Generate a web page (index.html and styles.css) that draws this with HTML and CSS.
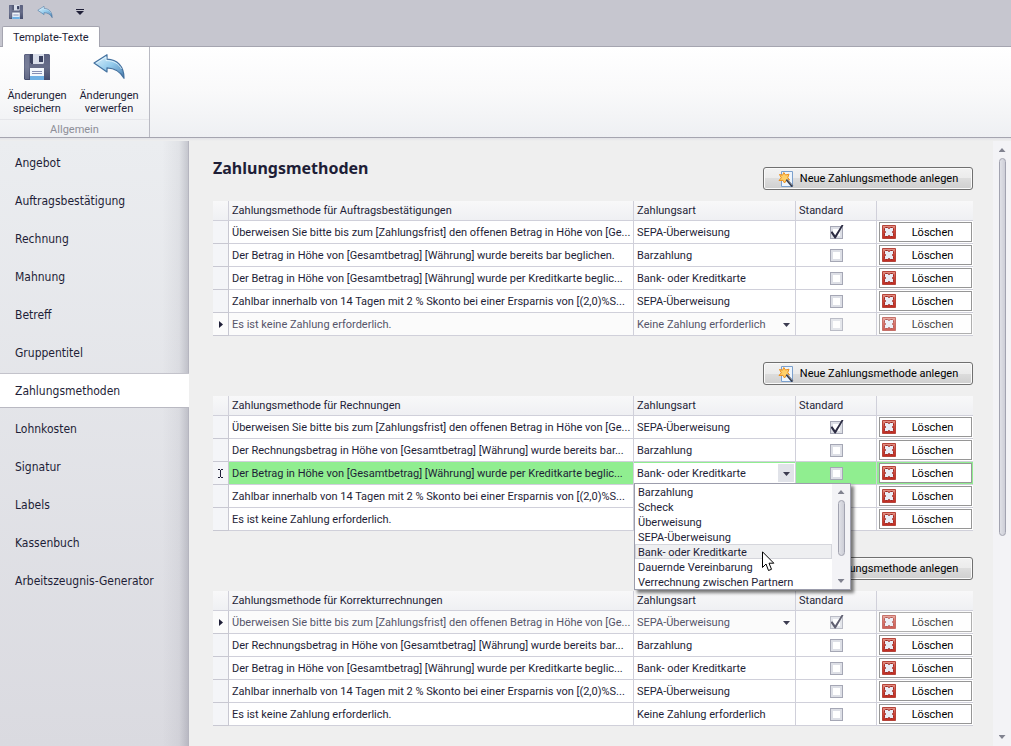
FILE: index.html
```html
<!DOCTYPE html>
<html lang="de">
<head>
<meta charset="utf-8">
<title>Template-Texte</title>
<link rel="stylesheet" href="styles.css">
</head>
<body>
<svg class="defs" width="0" height="0" aria-hidden="true">
  <defs>
    <linearGradient id="g-disk" x1="0" y1="0" x2="0" y2="1"><stop offset="0" stop-color="#5b6180"/><stop offset=".5" stop-color="#666c88"/><stop offset="1" stop-color="#454c6c"/></linearGradient>
    <linearGradient id="g-undo" x1="0" y1="0" x2="1" y2="1"><stop offset="0" stop-color="#e4f5fd"/><stop offset=".5" stop-color="#94cbec"/><stop offset="1" stop-color="#4a7eb0"/></linearGradient>
    <linearGradient id="g-del" x1="0" y1="0" x2="0" y2="1"><stop offset="0" stop-color="#e59a8e"/><stop offset=".45" stop-color="#d04a3c"/><stop offset="1" stop-color="#c02a20"/></linearGradient>
    <symbol id="i-save" viewBox="0 0 26 26">
      <path d="M0 1 1 0H25L26 1V26H1L0 25Z" fill="url(#g-disk)"/>
      <path d="M1 1H5V25H1Z" fill="#9aa0b8" opacity=".35"/>
      <path d="M6 0H20V9L19 10H7L6 9Z" fill="#d9deea"/>
      <path d="M6 0H9V10H7L6 9Z" fill="#3b425f"/>
      <path d="M15 2H19V8H15Z" fill="#39405f"/>
      <path d="M6 14H20V26H6Z" fill="#f4f8fd"/>
      <path d="M6 22H20V26H6Z" fill="#6fb0e4"/>
      <path d="M8 17.500H18M8 19.500H18" stroke="#8790b5" stroke-width="1"/>
    </symbol>
    <symbol id="i-undo" viewBox="0 0 32 25">
      <path d="M1 9 14 .7V5.200C24 5.500 31 12 31 24.300 27.500 17.500 22 14.200 14 13.800V18Z" fill="url(#g-undo)" stroke="#44719f" stroke-width="1.200" stroke-linejoin="round"/>
      <path d="M3.500 9 13 3V6.500C21 6.700 26 10 28.500 15" fill="none" stroke="#e6f6fe" stroke-width=".8"/>
    </symbol>
    <symbol id="i-new" viewBox="0 0 16 16">
      <path d="M3.500 .5H14.500V15.500H3.500Z" fill="#edf5fd" stroke="#7ba0cd"/>
      <path d="M5.800 1.500 7.500 4 11 3.200 9.800 6.500 11.500 9 8.400 9.300 6.500 12 5 9.300 1 9.500 3.300 6.800 1.500 3.500 4.600 4.200Z" fill="#ffd069" stroke="#ec8f1e"/>
      <path d="M8.500 8.500 14.500 15.500" stroke="#333a4c" stroke-width="2.200"/>
      <path d="M9 8 14.500 14.500" stroke="#b9bfca" stroke-width=".7"/>
    </symbol>
    <symbol id="i-del" viewBox="0 0 14 14">
      <path d="M.5 .5H13.500V13.500H.5Z" fill="url(#g-del)" stroke="#b5443a"/>
      <path d="M2.500 3.500 3.500 2.500H5.500L7 3.500 8.500 2.500H10.500L11.500 3.500V5.500L10.500 7 11.500 8.500V10.500L10.500 11.500H8.500L7 10.500 5.500 11.500H3.500L2.500 10.500V8.500L3.500 7 2.500 5.500Z" fill="#e9edf6" stroke="#9c2620"/>
    </symbol>
    <symbol id="i-row" viewBox="0 0 4 7"><path d="M0 0 4 3.500 0 7Z" fill="#1f1f38"/></symbol>
    <symbol id="i-edit" viewBox="0 0 5 9"><path d="M0 .5H2M3 .5H5M0 8.500H2M3 8.500H5M2.500 1V8" stroke="#1f1f38" fill="none"/></symbol>
  </defs>
</svg>

<header class="quickbar">
  <button class="quick" type="button" aria-label="Speichern"><svg width="14" height="14"><use href="#i-save"/></svg></button>
  <button class="quick" type="button" aria-label="Verwerfen"><svg width="16" height="12"><use href="#i-undo"/></svg></button>
  <button class="quick more" type="button" aria-label="Anpassen"><svg width="8" height="6" viewBox="0 0 8 6"><path d="M0 0H8V1H0ZM0 2H8L4 6Z" fill="#1f1f38"/></svg></button>
</header>
<nav class="tabs"><a class="tab" href="#ribbon">Template-Texte</a></nav>

<section class="ribbon" id="ribbon">
  <div class="group">
    <div class="tools">
      <button class="tool" type="button"><svg width="26" height="26"><use href="#i-save"/></svg><span>Änderungen<br>speichern</span></button>
      <button class="tool" type="button"><svg width="32" height="25"><use href="#i-undo"/></svg><span>Änderungen<br>verwerfen</span></button>
    </div>
    <div class="group-name">Allgemein</div>
  </div>
</section>

<div class="workspace">
  <nav class="side">
    <a href="#a">Angebot</a>
    <a href="#b">Auftragsbestätigung</a>
    <a href="#c">Rechnung</a>
    <a href="#d">Mahnung</a>
    <a href="#e">Betreff</a>
    <a href="#f">Gruppentitel</a>
    <a href="#g" class="current" aria-current="page">Zahlungsmethoden</a>
    <a href="#h">Lohnkosten</a>
    <a href="#i">Signatur</a>
    <a href="#j">Labels</a>
    <a href="#k">Kassenbuch</a>
    <a href="#l">Arbeitszeugnis-Generator</a>
  </nav>

  <main class="content">
    <section class="block">
      <div class="block-head">
        <h1>Zahlungsmethoden</h1>
        <button class="add" type="button"><svg width="16" height="16"><use href="#i-new"/></svg>Neue Zahlungsmethode anlegen</button>
      </div>
      <table class="grid">
        <colgroup><col class="c-mark"><col><col class="c-kind"><col class="c-std"><col class="c-del"></colgroup>
        <thead><tr><th></th><th>Zahlungsmethode für Auftragsbestätigungen</th><th>Zahlungsart</th><th>Standard</th><th></th></tr></thead>
        <tbody>
          <tr><td></td><td>Überweisen Sie bitte bis zum [Zahlungsfrist] den offenen Betrag in Höhe von [Ge...</td><td>SEPA-Überweisung</td><td><input type="checkbox" aria-label="Standard" checked></td><td><button class="del" type="button"><svg width="14" height="14"><use href="#i-del"/></svg><span>Löschen</span></button></td></tr>
          <tr><td></td><td>Der Betrag in Höhe von [Gesamtbetrag] [Währung] wurde bereits bar beglichen.</td><td>Barzahlung</td><td><input type="checkbox" aria-label="Standard"></td><td><button class="del" type="button"><svg width="14" height="14"><use href="#i-del"/></svg><span>Löschen</span></button></td></tr>
          <tr><td></td><td>Der Betrag in Höhe von [Gesamtbetrag] [Währung] wurde per Kreditkarte beglic...</td><td>Bank- oder Kreditkarte</td><td><input type="checkbox" aria-label="Standard"></td><td><button class="del" type="button"><svg width="14" height="14"><use href="#i-del"/></svg><span>Löschen</span></button></td></tr>
          <tr><td></td><td>Zahlbar innerhalb von 14 Tagen mit 2 % Skonto bei einer Ersparnis von [(2,0)%S...</td><td>SEPA-Überweisung</td><td><input type="checkbox" aria-label="Standard"></td><td><button class="del" type="button"><svg width="14" height="14"><use href="#i-del"/></svg><span>Löschen</span></button></td></tr>
          <tr class="dim"><td><svg width="4" height="7"><use href="#i-row"/></svg></td><td>Es ist keine Zahlung erforderlich.</td><td class="pick"><select aria-label="Zahlungsart"><option>Keine Zahlung erforderlich</option></select></td><td><input type="checkbox" aria-label="Standard"></td><td><button class="del" type="button"><svg width="14" height="14"><use href="#i-del"/></svg><span>Löschen</span></button></td></tr>
        </tbody>
      </table>
    </section>

    <section class="block">
      <div class="block-head">
        <button class="add" type="button"><svg width="16" height="16"><use href="#i-new"/></svg>Neue Zahlungsmethode anlegen</button>
      </div>
      <table class="grid">
        <colgroup><col class="c-mark"><col><col class="c-kind"><col class="c-std"><col class="c-del"></colgroup>
        <thead><tr><th></th><th>Zahlungsmethode für Rechnungen</th><th>Zahlungsart</th><th>Standard</th><th></th></tr></thead>
        <tbody>
          <tr><td></td><td>Überweisen Sie bitte bis zum [Zahlungsfrist] den offenen Betrag in Höhe von [Ge...</td><td>SEPA-Überweisung</td><td><input type="checkbox" aria-label="Standard" checked></td><td><button class="del" type="button"><svg width="14" height="14"><use href="#i-del"/></svg><span>Löschen</span></button></td></tr>
          <tr><td></td><td>Der Rechnungsbetrag in Höhe von [Gesamtbetrag] [Währung] wurde bereits bar...</td><td>Barzahlung</td><td><input type="checkbox" aria-label="Standard"></td><td><button class="del" type="button"><svg width="14" height="14"><use href="#i-del"/></svg><span>Löschen</span></button></td></tr>
          <tr class="active"><td><svg width="5" height="9"><use href="#i-edit"/></svg></td><td>Der Betrag in Höhe von [Gesamtbetrag] [Währung] wurde per Kreditkarte beglic...</td><td class="pick"><select aria-label="Zahlungsart"><option>Bank- oder Kreditkarte</option></select>
            <div class="popup">
              <ul role="listbox" aria-label="Zahlungsart">
                <li role="option">Barzahlung</li>
                <li role="option">Scheck</li>
                <li role="option">Überweisung</li>
                <li role="option">SEPA-Überweisung</li>
                <li role="option" class="hover" aria-selected="true">Bank- oder Kreditkarte</li>
                <li role="option">Dauernde Vereinbarung</li>
                <li role="option">Verrechnung zwischen Partnern</li>
              </ul>
              <div class="scroll small"><i class="up"></i><i class="thumb"></i><i class="down"></i></div>
              <svg class="cursor" width="13" height="21" viewBox="0 0 13 21"><path d="M.5 .8V16.500L4 13 6.500 19.500 9.500 18.300 7 12.200H11.800Z" fill="#fff" stroke="#000"/></svg>
            </div>
          </td><td><input type="checkbox" aria-label="Standard"></td><td><button class="del" type="button"><svg width="14" height="14"><use href="#i-del"/></svg><span>Löschen</span></button></td></tr>
          <tr><td></td><td>Zahlbar innerhalb von 14 Tagen mit 2 % Skonto bei einer Ersparnis von [(2,0)%S...</td><td></td><td><input type="checkbox" aria-label="Standard"></td><td><button class="del" type="button"><svg width="14" height="14"><use href="#i-del"/></svg><span>Löschen</span></button></td></tr>
          <tr><td></td><td>Es ist keine Zahlung erforderlich.</td><td></td><td><input type="checkbox" aria-label="Standard"></td><td><button class="del" type="button"><svg width="14" height="14"><use href="#i-del"/></svg><span>Löschen</span></button></td></tr>
        </tbody>
      </table>
    </section>

    <section class="block">
      <div class="block-head">
        <button class="add" type="button"><svg width="16" height="16"><use href="#i-new"/></svg>Neue Zahlungsmethode anlegen</button>
      </div>
      <table class="grid">
        <colgroup><col class="c-mark"><col><col class="c-kind"><col class="c-std"><col class="c-del"></colgroup>
        <thead><tr><th></th><th>Zahlungsmethode für Korrekturrechnungen</th><th>Zahlungsart</th><th>Standard</th><th></th></tr></thead>
        <tbody>
          <tr class="dim"><td><svg width="4" height="7"><use href="#i-row"/></svg></td><td>Überweisen Sie bitte bis zum [Zahlungsfrist] den offenen Betrag in Höhe von [Ge...</td><td class="pick"><select aria-label="Zahlungsart"><option>SEPA-Überweisung</option></select></td><td><input type="checkbox" aria-label="Standard" checked></td><td><button class="del" type="button"><svg width="14" height="14"><use href="#i-del"/></svg><span>Löschen</span></button></td></tr>
          <tr><td></td><td>Der Rechnungsbetrag in Höhe von [Gesamtbetrag] [Währung] wurde bereits bar...</td><td>Barzahlung</td><td><input type="checkbox" aria-label="Standard"></td><td><button class="del" type="button"><svg width="14" height="14"><use href="#i-del"/></svg><span>Löschen</span></button></td></tr>
          <tr><td></td><td>Der Betrag in Höhe von [Gesamtbetrag] [Währung] wurde per Kreditkarte beglic...</td><td>Bank- oder Kreditkarte</td><td><input type="checkbox" aria-label="Standard"></td><td><button class="del" type="button"><svg width="14" height="14"><use href="#i-del"/></svg><span>Löschen</span></button></td></tr>
          <tr><td></td><td>Zahlbar innerhalb von 14 Tagen mit 2 % Skonto bei einer Ersparnis von [(2,0)%S...</td><td>SEPA-Überweisung</td><td><input type="checkbox" aria-label="Standard"></td><td><button class="del" type="button"><svg width="14" height="14"><use href="#i-del"/></svg><span>Löschen</span></button></td></tr>
          <tr><td></td><td>Es ist keine Zahlung erforderlich.</td><td>Keine Zahlung erforderlich</td><td><input type="checkbox" aria-label="Standard"></td><td><button class="del" type="button"><svg width="14" height="14"><use href="#i-del"/></svg><span>Löschen</span></button></td></tr>
        </tbody>
      </table>
    </section>
  </main>

  <div class="scroll"><i class="up"></i><i class="thumb"></i><i class="down"></i></div>
</div>
</body>
</html>
```
FILE: styles.css
```css
* { box-sizing: border-box; }

body {
  margin: 0;
  min-height: 100vh;
  display: flex;
  flex-direction: column;
  background: #efefef;
  color: #1e1e37;
  font: 11px/13px Roboto, Tahoma, "DejaVu Sans Condensed", sans-serif;
}

.defs { position: absolute; }
svg { display: block; flex: none; }
a { color: inherit; text-decoration: none; }

button, select {
  font: inherit;
  color: inherit;
  border: 0;
  margin: 0;
  padding: 0;
  background: none;
}

/* Title area and ribbon */
.quickbar {
  display: flex;
  align-items: center;
  gap: 14px;
  height: 26px;
  padding: 0 9px 2px;
  background: #c6c6cf;
}
.quick.more { margin-left: 9px; }

.tabs {
  display: flex;
  padding-left: 2px;
  background: #c6c6cf;
  border-bottom: 1px solid #a5a5b0;
}
.tab {
  height: 21px;
  margin-bottom: -1px;
  padding: 4px 10px 0;
  background: #fff;
  border: 1px solid #a5a5b0;
  border-bottom: 0;
  border-radius: 2px 2px 0 0;
}

.ribbon {
  display: flex;
  background: linear-gradient(#fff, #f9f9fa 50%, #eef0f3);
  border-bottom: 1px solid #a5a5b0;
}
.group {
  display: flex;
  flex-direction: column;
  border-right: 1px solid #b9bac3;
}
.tools { display: flex; padding: 7px 4px 0 1px; }
.tool {
  display: flex;
  flex-direction: column;
  align-items: center;
  justify-content: space-between;
  width: 72px;
  height: 61px;
}
.group-name {
  margin-top: 4px;
  padding: 3px 0 1px;
  text-align: center;
  color: #8e8f98;
  border-top: 1px solid #e5e6ea;
}

/* Work area */
.workspace {
  flex: 1;
  display: flex;
  padding-top: 3px;
  background: linear-gradient(#e2e3e7, #efefef 3px);
}

.side {
  flex: none;
  width: 189px;
  display: flex;
  flex-direction: column;
  gap: 5px;
  padding-top: 5px;
  border-right: 1px solid #b5b5bf;
  background:
    linear-gradient(to left, rgba(90, 90, 110, .26), rgba(90, 90, 110, .07) 9px, transparent 26px),
    linear-gradient(#ebedf0, #dadae0);
  font: 12px/17px "DejaVu Sans Condensed", Tahoma, sans-serif;
}
.side a { padding: 9px 15px 7px; }
.side .current {
  margin-right: -1px;
  background: #fff;
  box-shadow: 0 -1px #c3c3cb, 0 1px #b9b9c2;
}

.content { flex: 1; min-width: 0; padding: 0 20px 10px 24px; }
.block + .block { margin-top: 26px; }
.block-head {
  display: flex;
  justify-content: flex-end;
  align-items: flex-end;
  padding-bottom: 11px;
}
h1 {
  flex: 1;
  margin: 0;
  padding: 15px 0 10px;
  font: bold 16px/24px "Noto Sans", "Open Sans", sans-serif;
}

.add {
  display: flex;
  align-items: center;
  justify-content: center;
  gap: 6px;
  min-width: 210px;
  height: 23px;
  padding: 0 8px;
  color: #000;
  border: 1px solid #707070;
  border-radius: 3px;
  background: linear-gradient(#f2f2f2, #ebebeb 50%, #dddddd 50%, #cfcfcf);
  box-shadow: inset 0 0 0 1px #fafafa;
}

/* Data grid */
.grid {
  width: 100%;
  table-layout: fixed;
  border-collapse: separate;
  border-spacing: 0;
}
.c-mark { width: 16px; }
.c-kind { width: 162px; }
.c-std { width: 81px; }
.c-del { width: 96px; }

.grid th, .grid td {
  padding: 0 3px;
  text-align: left;
  font-weight: normal;
  white-space: nowrap;
  border-right: 1px solid #d0d0da;
  border-bottom: 1px solid #d0d0da;
}
.grid th { height: 20px; background: linear-gradient(#f8f8f9, #eff0f3); }
.grid td { height: 23px; background: #fff; }
.grid td:first-child {
  padding: 0;
  background: #f4f5f8;
  border-color: #c8c8d2;
}
.grid td:first-child svg { margin: 0 auto; }
.grid tr > :last-child { border-right: 0; }
.grid td:nth-child(4) { text-align: center; }
.grid td:last-child { padding: 0 1px 0 2px; }

.grid .dim td { background: #fbfbfb; }
.grid .dim td:nth-child(2), .dim select { color: #55556a; }
.dim input, .dim .del { opacity: .75; }
.grid .active td:not(:first-child) { background: #90ee90; }

input[type="checkbox"] {
  appearance: none;
  position: relative;
  display: block;
  width: 13px;
  height: 13px;
  margin: 0 auto;
  border: 1px solid #a5a7b5;
  background: #fff;
  box-shadow: inset 0 0 0 2px #dddfe6;
}
input[type="checkbox"]:checked::after {
  content: "";
  position: absolute;
  left: 0;
  top: -2px;
  width: 13px;
  height: 14px;
  background: #2b2b42;
  clip-path: polygon(0 55%, 14% 48%, 36% 76%, 88% 0, 100% 4%, 40% 100%, 32% 100%);
}

.grid .pick { position: relative; padding: 0; }
.pick select {
  appearance: none;
  display: block;
  width: 100%;
  height: 20px;
  padding: 0 20px 0 3px;
}
.pick::before {
  content: "";
  position: absolute;
  right: 5px;
  top: 10px;
  width: 7px;
  height: 4px;
  background: #3c3c50;
  clip-path: polygon(0 0, 100% 0, 50% 100%);
  pointer-events: none;
  z-index: 1;
}
.active .pick select {
  border: 1px solid #fff;
  padding-left: 2px;
  background: linear-gradient(to left, #e1e3e9 16px, #fff 16px);
}

.del {
  display: flex;
  align-items: center;
  width: 100%;
  height: 20px;
  padding: 0 2px;
  color: #000;
  border: 1px solid #969696;
  background: #fff;
}
.del span { flex: 1; text-align: center; }

/* Open drop-down list */
.popup {
  position: absolute;
  z-index: 2;
  left: 0;
  top: 21px;
  width: 217px;
  display: flex;
  background: #fff;
  border: 1px solid #9c9dac;
  box-shadow: 3px 3px 3px rgba(0, 0, 0, .5);
}
.popup ul { flex: 1; margin: 0; padding: 0; list-style: none; }
.popup li {
  height: 15px;
  padding: 0 2px;
  line-height: 15px;
  border: 1px solid transparent;
}
.popup .hover { background: #eeeff1; border-color: #d5d6dc; }
.cursor { position: absolute; left: 127px; top: 67px; }

/* Scroll bars */
.scroll {
  flex: none;
  display: flex;
  flex-direction: column;
  align-items: center;
  width: 18px;
  padding: 7px 0;
  background: #f3f3f6;
}
.scroll .up, .scroll .down { width: 7px; height: 4px; background: #80828f; }
.scroll .up { clip-path: polygon(50% 0, 100% 100%, 0 100%); }
.scroll .down { clip-path: polygon(0 0, 100% 0, 50% 100%); margin-top: auto; }
.scroll .thumb {
  width: 7px;
  height: 64%;
  margin-top: 6px;
  border: 1px solid #a2a3b0;
  border-radius: 4px;
  background: linear-gradient(to right, #e0e1e7, #cdced7);
}
.scroll.small { padding: 6px 0; }
.scroll.small .thumb { height: 60%; }
```
